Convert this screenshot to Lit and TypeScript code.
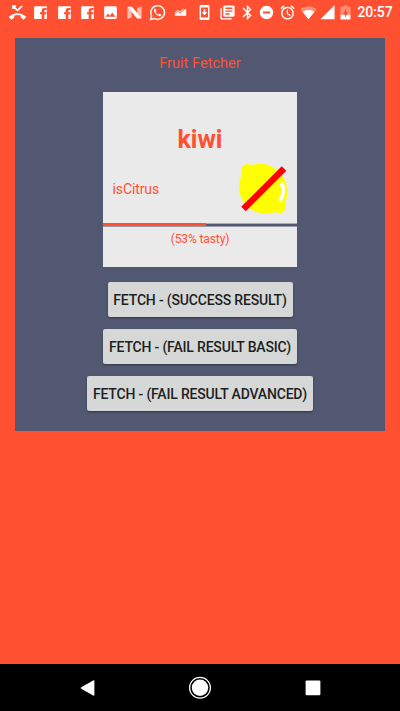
import { LitElement, html, css, svg } from "lit";
import { customElement, property } from "lit/decorators.js";

const facebook = svg`<path fill-rule="evenodd" d="M4 3h16a1 1 0 0 1 1 1v16a1 1 0 0 1-1 1h-2.500v-6.500h2.500l.4-3h-2.900V9.900c0-.9.4-1.300 1.400-1.300h1.700V5.500h-2.900c-2.800 0-4.100 1.600-4.100 3.700v2.300h-2.300v3h2.300V21H4a1 1 0 0 1-1-1V4a1 1 0 0 1 1-1z"/>`;

const notifications = [
  svg`<path fill="none" stroke="#fff" stroke-width="2.400" d="M5.500 3l6.500 6 6.500-6M5.500 7V3H10"/><path d="M23.710 17.670C20.660 14.780 16.540 13 12 13 7.460 13 3.340 14.780.290 17.670c-.180.180-.290.430-.290.710s.110.530.290.710l2.480 2.480c.180.180.430.290.710.290.270 0 .520-.110.700-.280.790-.740 1.690-1.360 2.660-1.850.330-.160.560-.5.560-.9v-2.600c1.450-.480 3-.730 4.600-.730 1.600 0 3.150.250 4.600.720v2.600c0 .390.230.740.560.9.980.490 1.870 1.120 2.670 1.850.180.180.430.280.700.280.280 0 .530-.110.710-.290l2.480-2.480c.180-.180.290-.430.290-.710s-.120-.520-.300-.700z"/>`,
  facebook,
  facebook,
  facebook,
  svg`<path d="M21 19V5c0-1.100-.9-2-2-2H5c-1.100 0-2 .9-2 2v14c0 1.100.9 2 2 2h14c1.100 0 2-.9 2-2zM8.500 13.500l2.500 3 3.500-4.500 4.500 6H5l3.500-4.500z"/>`,
  svg`<path opacity=".6" d="M2 5l6 3v11l-6 2zM15.500 6L22 3v17l-6.500-3z"/><path d="M2 4h6.500L22 20.500h-6.500z"/>`,
  svg`<path fill="none" stroke="#fff" stroke-width="2" d="M2.200 21.800l1.500-5.200A9.700 9.700 0 1 1 7.400 20.400z"/><path d="M8.500 6.500c-1.200.2-2 1.700-1.600 3.200 1 3.500 3.800 6.400 7.400 7.500 1.600.3 3-.7 3.200-2.200l-3-1.500-1.300 1.500c-1.800-.7-3.300-2.200-4-3.900l1.200-1.300z"/>`,
  svg`<path d="M4 16.500v-2l4-3.500 3 2.500 9-7v10zM4 13v-1.500l4-3.200 3 2.200 5-4.200v1.800l-5 4-3-2z"/>`,
  svg`<path fill-rule="evenodd" d="M7 1.500h10a2 2 0 0 1 2 2v17a2 2 0 0 1-2 2H7a2 2 0 0 1-2-2v-17a2 2 0 0 1 2-2zM7 5v14h10V5zM10.900 7.500h2.200v4.300H16l-4 4-4-4h2.900z"/>`,
  svg`<path d="M4 6H2v14c0 1.100.9 2 2 2h14v-2H4V6zm16-4H8c-1.100 0-2 .9-2 2v12c0 1.100.9 2 2 2h12c1.100 0 2-.9 2-2V4c0-1.100-.9-2-2-2zm-1 9H9V9h10v2zm-4 4H9v-2h6v2zm4-8H9V5h10v2z"/>`,
];

const system = [
  { name: "bluetooth", art: svg`<path d="M17.710 7.710L12 2h-1v7.590L6.410 5 5 6.410 10.590 12 5 17.590 6.410 19 11 14.410V22h1l5.710-5.710-4.300-4.290 4.300-4.290zM13 5.830l1.880 1.880L13 9.590V5.830zm1.880 10.460L13 18.170v-3.760l1.880 1.880z"/>` },
  { name: "quiet", art: svg`<path fill-rule="evenodd" d="M12 2.500a9.500 9.500 0 1 0 0 19 9.500 9.500 0 0 0 0-19zM17 13.500H7v-3h10z"/>` },
  { name: "alarm", art: svg`<path d="M22 5.720l-4.600-3.860-1.290 1.530 4.600 3.860L22 5.720zM7.880 3.390L6.600 1.860 2 5.710l1.290 1.530 4.590-3.850zM12.500 8H11v6l4.750 2.850.75-1.230-4-2.370V8zM12 4c-4.970 0-9 4.030-9 9s4.020 9 9 9a9 9 0 0 0 0-18zm0 16c-3.870 0-7-3.130-7-7s3.130-7 7-7 7 3.130 7 7-3.130 7-7 7z"/>` },
  { name: "wifi", art: svg`<path opacity=".35" d="M12 21.500L.4 7A19 19 0 0 1 23.600 7z"/><path d="M12 21.500L3.700 11.200c5-3.600 11.600-3.600 16.600 0z"/>` },
  { name: "signal", art: svg`<path d="M2 21.500h20v-20z"/>` },
  { name: "battery", art: svg`<path opacity=".35" d="M9 2h6v2h3a1 1 0 0 1 1 1v10H5V5a1 1 0 0 1 1-1h3z"/><path d="M5 15h14v6a1 1 0 0 1-1 1H6a1 1 0 0 1-1-1z"/><path fill="#ff5131" d="M13 6l-4.500 8h2.800v5.500l4.500-8h-2.800z"/>` },
];

@customElement("status-bar")
class StatusBar extends LitElement {
  static styles = css`
    :host { display: flex; height: 24px; padding-left: 6px; color: #fff; }
    .cell { display: flex; align-items: center; justify-content: center; flex: none; height: 24px; width: 23.3px; }
    svg { width: 17px; height: 17px; fill: #fff; display: block; flex: none; }
    .bluetooth { width: 17px; }
    .quiet { width: 21px; }
    .alarm { width: 21px; }
    .wifi { width: 22px; }
    .signal { width: 15px; }
    .battery { width: 22px; }
    .clock { font: 500 14px/25px Roboto, sans-serif; margin-left: 0.5px; letter-spacing: -0.1px; white-space: nowrap; }
  `;
  render() {
    return html`
      ${notifications.map((art) => html`<span class="cell"><svg viewBox="0 0 24 24">${art}</svg></span>`)}
      ${system.map((s) => html`<span class="cell ${s.name}"><svg viewBox="0 0 24 24">${s.art}</svg></span>`)}
      <span class="clock">20:57</span>
    `;
  }
}

@customElement("fruit-card")
class FruitCard extends LitElement {
  @property() name = "";
  @property({ type: Number }) tasty = 0;
  static styles = css`
    :host { display: block; width: 194px; height: 175px; background: #eaeaea; color: #ff5131; font-family: Roboto, sans-serif; }
    .name { height: 71px; padding-top: 25px; box-sizing: border-box; font-size: 25px; font-weight: 700; line-height: 46px; text-align: center; }
    .row { display: flex; align-items: center; justify-content: space-between; height: 52px; padding: 0 8.500px 0 9.500px; font-size: 14px; letter-spacing: -0.1px; }
    .label { padding-top: 0.5px; }
    .lemon { width: 50px; height: 50px; display: block; }
    .track { height: 4px; margin-top: 8px; background: linear-gradient(#a8aab8 0 1px, #525871 1px 3px, #9a9caa 3px); }
    .fill { height: 3px; background: #ff5131; }
    .note { font-size: 12px; letter-spacing: -0.1px; line-height: 24px; text-align: center; }
  `;
  render() {
    return html`
      <div class="name">${this.name}</div>
      <div class="row">
        <span class="label">isCitrus</span>
        <svg class="lemon" viewBox="0 0 50 50">
          <path fill="#ff0" d="M3 9C1 4 5 0 9 0l4 1C18-1 29-1 35 4c9 5 15 17 13 28l-2 8c2 4-1 10-6 9l-4-1c-7 3-16 2-23-2C3 40-2 28 1 16z"/>
          <path fill="none" stroke="#fff" stroke-width="4" d="M42.500 19c3 6 2 13-2 18"/>
          <path fill="none" stroke="red" stroke-width="6.500" d="M4.500 45L45 4.500"/>
        </svg>
      </div>
      <div class="track"><div class="fill" style="width:${this.tasty}%"></div></div>
      <div class="note">(${this.tasty}% tasty)</div>
    `;
  }
}

@customElement("app-root")
class AppRoot extends LitElement {
  static styles = css`
    :host { display: flex; flex-direction: column; height: 711px; background: #ff5131; font-family: Roboto, sans-serif; overflow: hidden; }
    .panel { display: flex; flex-direction: column; align-items: center; box-sizing: border-box; height: 393.400px; margin: 14px 14.600px 0; background: #525871; }
    .title { color: #ff5131; font-size: 14.600px; line-height: 20px; margin: 15px 0 19px; }
    .buttons { display: flex; flex-direction: column; align-items: center; gap: 11.700px; margin-top: 15.400px; }
    button { display: block; height: 35px; padding: 2px 0 0; border: 0; border-radius: 2px; background: #d6d8d7; color: #1d1e1e; font: 500 14px/33px Roboto, sans-serif; letter-spacing: -0.180px; white-space: nowrap; box-shadow: 0 1px 2px rgba(0, 0, 0, 0.4); }
    .success { width: 185px; }
    .basic { width: 194px; }
    .advanced { width: 226px; }
    .nav { display: flex; align-items: center; justify-content: space-between; height: 47px; margin-top: auto; padding: 0 75.500px; background: #000; }
    .nav svg { width: 24px; height: 24px; fill: #fff; }
  `;
  render() {
    return html`
      <status-bar></status-bar>
      <main class="panel">
        <div class="title">Fruit Fetcher</div>
        <fruit-card name="kiwi" .tasty=${53}></fruit-card>
        <div class="buttons">
          <button class="success">FETCH - (SUCCESS RESULT)</button>
          <button class="basic">FETCH - (FAIL RESULT BASIC)</button>
          <button class="advanced">FETCH - (FAIL RESULT ADVANCED)</button>
        </div>
      </main>
      <nav class="nav">
        <svg viewBox="0 0 24 24"><path d="M5.200 11.200L17.200 4.400q1.200-.5 1.200.8v13.500q0 1.300-1.200.8L5.200 12.700q-1-.7 0-1.500z"/></svg>
        <svg viewBox="0 0 24 24"><circle cx="12" cy="11.700" r="8.200"/><circle cx="12" cy="11.700" r="10.400" fill="none" stroke="#fff" stroke-width="1.200"/></svg>
        <svg viewBox="0 0 24 24"><rect x="4.600" y="4.400" width="14.800" height="14.800" rx="1"/></svg>
      </nav>
    `;
  }
}
